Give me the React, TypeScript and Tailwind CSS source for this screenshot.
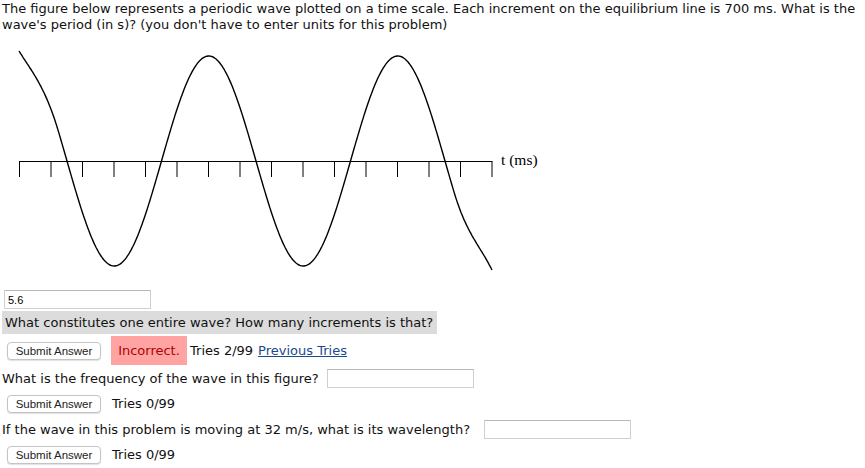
import React from "react";

const TOP = 40; // svg top in page coordinates

const sine = (x: number) => 161 + 105 * Math.sin((Math.PI * (x - 65)) / 94.5);
const slope = (x: number) => ((105 * Math.PI) / 94.5) * Math.cos((Math.PI * (x - 65)) / 94.5);

// cubic hermite between two points with given slopes
function hermite(x0: number, y0: number, m0: number, x1: number, y1: number, m1: number, x: number) {
  const h = x1 - x0;
  const t = (x - x0) / h;
  const t2 = t * t;
  const t3 = t2 * t;
  return (
    (2 * t3 - 3 * t2 + 1) * y0 +
    (t3 - 2 * t2 + t) * h * m0 +
    (-2 * t3 + 3 * t2) * y1 +
    (t3 - t2) * h * m1
  );
}

function wavePoints() {
  const pts: [number, number][] = [];
  const L = 56;
  const R = 452;
  for (let x = 17; x < L; x += 1) pts.push([x, hermite(17, 51, 1.6, L, sine(L), slope(L), x)]);
  for (let x = L; x <= R; x += 1) pts.push([x, sine(x)]);
  for (let x = R + 1; x <= 490; x += 1) pts.push([x, hermite(R, sine(R), slope(R), 490, 270, 2, x)]);
  return pts.map(([x, y]) => `${x},${(y - TOP).toFixed(1)}`).join(" ");
}

const TICKS = Array.from({ length: 16 }, (_, i) => 17.5 + i * 31.5);

function WaveFigure() {
  return (
    <svg width="560" height="248" viewBox="0 0 560 248" className="block">
      <line x1="17" y1={121.5} x2="490.5" y2={121.5} stroke="#000" strokeWidth="1" />
      {TICKS.map((x) => (
        <line key={x} x1={x} y1={121.5} x2={x} y2={137} stroke="#000" strokeWidth="1" />
      ))}
      <polyline points={wavePoints()} fill="none" stroke="#000" strokeWidth="1.4" />
      <text x="499" y="125" fontFamily="'Liberation Serif', serif" fontSize="15.5" fill="#000">
        t (ms)
      </text>
    </svg>
  );
}

function SubmitButton() {
  return (
    <button
      type="button"
      className="h-[18px] w-[94px] rounded-[4px] border border-[#c4c4c4] bg-white text-[11.5px] text-[#222] shadow-[0_1px_1px_rgba(0,0,0,0.12)] [font-family:'Liberation_Sans',Arial,sans-serif]"
    >
      Submit Answer
    </button>
  );
}

function TextInput({ value, width }: { value?: string; width: string }) {
  return (
    <input
      type="text"
      defaultValue={value}
      className={`h-[19px] ${width} border border-[#cfcfcf] border-t-[#b8b8b8] bg-white px-[3px] text-[11px] text-black outline-none [font-family:'Liberation_Sans',Arial,sans-serif]`}
    />
  );
}

export default function App() {
  return (
    <div className="min-h-[468px] w-[865px] bg-white pl-[2px] text-[13px] leading-[16px] text-[#111] [font-family:'DejaVu_Sans',Verdana,sans-serif]">
      <p className="pt-[1px]">
        The figure below represents a periodic wave plotted on a time scale. Each increment on the equilibrium line is 700 ms. What is the wave's period (in s)? (you don't have to enter units for this problem)
      </p>
      <div className="mt-[7px]">
        <WaveFigure />
      </div>

      <div className="mt-[2px] flex h-[19px] items-center pl-[2px]">
        <TextInput value="5.6" width="w-[147px]" />
      </div>

      <div className="mt-[2px] flex h-[23px] w-[435px] items-center bg-[#dcdcdc] pl-[3px]">
        What constitutes one entire wave? How many increments is that?
      </div>

      <div className="mt-[2px] flex h-[29px] items-center">
        <div className="ml-[5px]">
          <SubmitButton />
        </div>
        <div className="ml-[10px] flex h-[29px] w-[76px] items-center justify-center bg-[#ffa3a3] text-[#b00000]">
          Incorrect.
        </div>
        <span className="ml-[3px]">Tries 2/99</span>
        <a href="#" className="ml-[5px] text-[#1a4a8c] underline">
          Previous Tries
        </a>
      </div>

      <div className="mt-[4px] flex h-[19px] items-center">
        <span>What is the frequency of the wave in this figure?</span>
        <div className="ml-[8px]">
          <TextInput width="w-[147px]" />
        </div>
      </div>

      <div className="mt-[6px] flex h-[19px] items-center">
        <div className="ml-[5px]">
          <SubmitButton />
        </div>
        <span className="ml-[11px]">Tries 0/99</span>
      </div>

      <div className="mt-[7px] flex h-[19px] items-center">
        <span>If the wave in this problem is moving at 32 m/s, what is its wavelength?</span>
        <div className="ml-[14px]">
          <TextInput width="w-[147px]" />
        </div>
      </div>

      <div className="mt-[6px] flex h-[19px] items-center">
        <div className="ml-[5px]">
          <SubmitButton />
        </div>
        <span className="ml-[11px]">Tries 0/99</span>
      </div>
    </div>
  );
}
